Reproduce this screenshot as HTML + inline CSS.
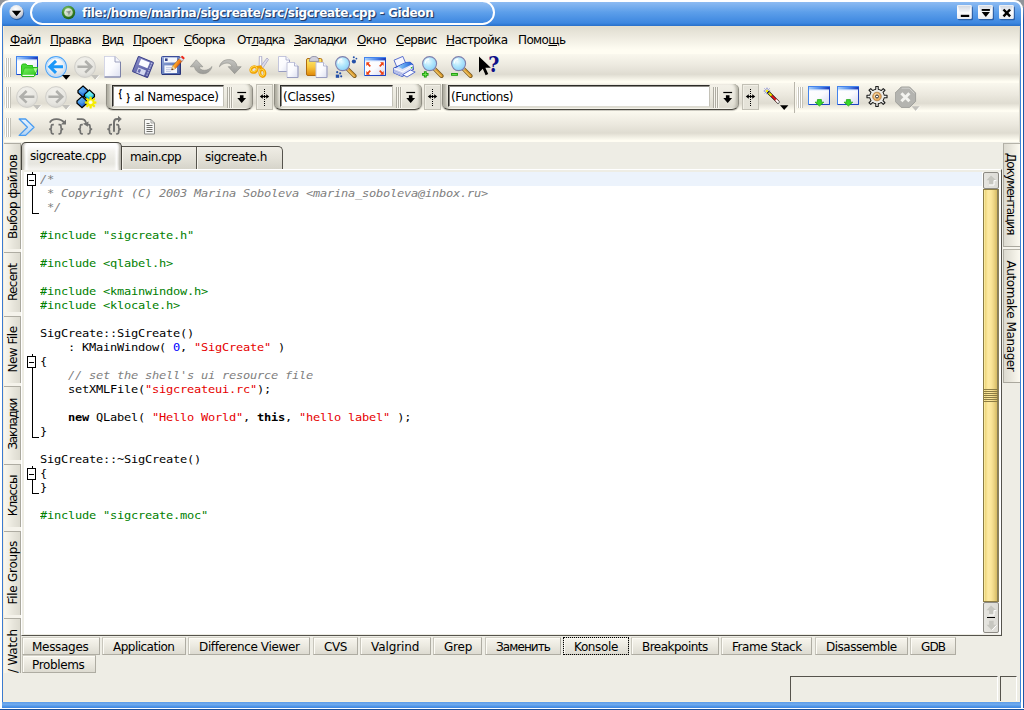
<!DOCTYPE html>
<html lang="ru"><head><meta charset="utf-8"><title>file:/home/marina/sigcreate/src/sigcreate.cpp - Gideon</title>
<style>
html{background:#90949a}
body{margin:0;width:1024px;height:710px;position:relative;overflow:hidden;background:#eeede5;font:12px/14px 'DejaVu Sans','Liberation Sans',sans-serif;color:#000}
div,span.t,svg.a{position:absolute;box-sizing:border-box}
span.t{white-space:pre}
u{text-decoration:underline;text-underline-offset:1px}
.tb{left:3px;width:1017px;background:linear-gradient(#faf8ee 0%,#ece9df 40%,#dfdcd1 70%,#fffdf2 95%,#fffdf2 100%)}
.h{width:6px;background:repeating-linear-gradient(90deg,#fff 0,#fff 1px,#c4c2b8 1px,#c4c2b8 2px)}
.code{font:12px/14px 'DejaVu Sans Mono','Liberation Mono',monospace;letter-spacing:-0.2246px;white-space:pre;left:40px;transform:scaleY(.83);transform-origin:0 11px}
.c{color:#808080;font-style:italic}.p{color:#008000}.s{color:#e60000}.n{color:#0000ff}.k{font-weight:bold}
.bt{height:18px;border:1px solid #aeaca2;border-top-color:#d2d0c6;border-left-color:#c8c6bc;background:linear-gradient(#f7f5ee,#ebe9e0 50%,#dddbd1);box-shadow:inset 1px 1px 0 #fdfcf6}
.vt{width:18px;left:3px;border-top:1px solid #aeaca2;border-right:1px solid #aaa89e;background:linear-gradient(90deg,#fbf9f0,#f0eee4 35%,#e6e4da 65%,#dddbd0)}
.vr{width:17px;left:1003px;border-top:1px solid #b4b2a8;border-left:1px solid #b0aea4;border-bottom:1px solid #aaa89e;background:linear-gradient(90deg,#dcdad0,#e6e4da 35%,#f0eee4 65%,#fbf9f0)}
.cb{height:26px;border-radius:0 6px 7px 7px/0 5px 6px 6px;border-bottom:1px solid #4a4840;border-left:1px solid #8e8c82;border-right:1px solid #8e8c82;background:linear-gradient(#f3f1e8,#ebe9df 50%,#dcdace);box-shadow:inset 5px 0 3px -2px #b0aea2,inset -4px 0 3px -2px #b4b2a6,inset 0 -2px 1px -1px #fbfaf2,0 1px 1px rgba(0,0,0,.22)}
.cbf{left:5px;top:1px;height:22px;background:#fff;border:1px solid #2c2b28;border-right-color:#c4c2b8;border-bottom-color:#dddbd2;box-shadow:inset 1px 1px 0 #8c8a84}
.sp{width:17px;height:26px;top:84px;background:#e5e3d9;border:1px solid #c2c0b5;box-shadow:inset 1px 1px 0 #f1efe6}
</style></head><body>
<div style="left:0px;top:0px;width:10px;height:10px;background:#90949a"></div>
<div style="left:1014px;top:0px;width:10px;height:10px;background:#90949a"></div>
<div style="left:0px;top:0px;width:1023px;height:26px;background:linear-gradient(#8dbbf2 0,#5d9fea 10px,#3d87e0 21px,#3580da 22px,#2c73cc 23.5px);border:2px solid #fff;border-bottom:0;border-radius:9px 9px 0 0"></div>
<div style="left:30px;top:0px;width:465px;height:25px;border:2px solid #fff;border-radius:12.5px;background:linear-gradient(#93bff3 0,#5d9fea 11px,#3d87e0 21px)"></div>
<div style="left:0px;top:8px;width:2px;height:702px;background:#fff"></div>
<div style="left:2px;top:25px;width:1px;height:683px;background:#3a7bd0"></div>
<div style="left:1020px;top:25px;width:1px;height:683px;background:#4183d6"></div>
<div style="left:1021px;top:8px;width:2px;height:702px;background:#fff"></div>
<div style="left:1023px;top:7px;width:1px;height:703px;background:linear-gradient(#6a88b4 0,#1c58a8 14px)"></div>
<div style="left:2px;top:702px;width:1019px;height:6px;background:linear-gradient(#5b9be8,#6fabee 40%,#3a85e0)"></div>
<div style="left:0px;top:708px;width:1024px;height:1px;background:#fff"></div>
<div style="left:0px;top:709px;width:1024px;height:1px;background:#18509c"></div>
<svg class="a" style="left:8px;top:4px" width="18" height="18" viewBox="0 0 18 18"><defs><radialGradient id="mb" cx=".45" cy=".3" r=".7"><stop offset="0" stop-color="#fff"/><stop offset=".6" stop-color="#e4e6ea"/><stop offset="1" stop-color="#a8b0c0"/></radialGradient></defs><circle cx="9" cy="9" r="7.200" fill="#123a7a" opacity=".6"/><circle cx="8.4" cy="8.1" r="7" fill="url(#mb)"/><path d="M3.8 6.8h9.4l-4.7 5.4z" fill="#000"/></svg>
<svg class="a" style="left:61px;top:5px" width="15" height="15" viewBox="0 0 15 15"><defs><radialGradient id="ti" cx=".4" cy=".3" r=".75"><stop offset="0" stop-color="#8cc878"/><stop offset=".55" stop-color="#3c8c2c"/><stop offset="1" stop-color="#1c5814"/></radialGradient><linearGradient id="tj" x1="0" y1="0" x2="1" y2="1"><stop offset="0" stop-color="#f4f8f0"/><stop offset="1" stop-color="#a8c0a0"/></linearGradient></defs><circle cx="7.500" cy="7.500" r="6.700" fill="url(#ti)"/><circle cx="7.500" cy="7.500" r="4.300" fill="url(#tj)"/><path d="M4.600 6.800l5.600-1.400-2.400 5.200-.8-2.800z" fill="#8c948c"/></svg>
<span class="t" style="left:82px;top:6px;font:bold 12px/14px 'DejaVu Sans','Liberation Sans',sans-serif;color:#fff;letter-spacing:-0.322px;text-shadow:1px 1px 0 #27406e,1px 1px 1px #27406e">file:/home/marina/sigcreate/src/sigcreate.cpp - Gideon</span>
<svg class="a" width="0" height="0"><defs><linearGradient id="tbg" x1="0" y1="0" x2="0" y2="1"><stop offset="0" stop-color="#f2f4f7"/><stop offset=".5" stop-color="#fdfdfe"/><stop offset="1" stop-color="#e8ebf0"/></linearGradient><linearGradient id="tbh" x1="0" y1="0" x2="0" y2="1"><stop offset="0" stop-color="#d2d8e2"/><stop offset="1" stop-color="#f4f6f9"/></linearGradient></defs></svg>
<svg class="a" style="left:957px;top:4px" width="18" height="18" viewBox="0 0 18 18"><rect x="1" y="2.200" width="15" height="14" rx="1.500" fill="#173f80" opacity=".6"/><rect x="0" y="1" width="14.800" height="14" rx="1.300" fill="url(#tbg)"/><path d="M1 1.800h12.800l-1.600 6.400H2.600z" fill="url(#tbh)"/><rect x="3.800" y="10.800" width="8.400" height="2.200" fill="#000"/></svg>
<svg class="a" style="left:978px;top:4px" width="18" height="18" viewBox="0 0 18 18"><rect x="1" y="2.200" width="15" height="14" rx="1.500" fill="#173f80" opacity=".6"/><rect x="0" y="1" width="14.800" height="14" rx="1.300" fill="url(#tbg)"/><path d="M1 1.800h12.800l-1.600 6.400H2.600z" fill="url(#tbh)"/><rect x="3.700" y="5" width="8.200" height="1.900" fill="#000"/><path d="M3.700 8h8.200l-4.100 5z" fill="#000"/></svg>
<svg class="a" style="left:999px;top:4px" width="18" height="18" viewBox="0 0 18 18"><rect x="1" y="2.200" width="15" height="14" rx="1.500" fill="#173f80" opacity=".6"/><rect x="0" y="1" width="14.800" height="14" rx="1.300" fill="url(#tbg)"/><path d="M1 1.800h12.800l-1.600 6.400H2.600z" fill="url(#tbh)"/><path d="M4.500 5.500l6.600 6.800M11.100 5.500l-6.600 6.800" stroke="#000" stroke-width="2.500"/></svg>
<div style="left:3px;top:26px;width:1017px;height:28px;background:linear-gradient(#e8e1ce 0,#e0ddd0 1px,#ece9de 10px,#fbf9ee 21px,#fffdf2 24px,#fffdf2 28px)"></div>
<span class="t" style="left:10px;top:33px;font:normal 12px/14px 'DejaVu Sans','Liberation Sans',sans-serif;color:#000;letter-spacing:-0.689px;"><u>Ф</u>айл</span>
<span class="t" style="left:50px;top:33px;font:normal 12px/14px 'DejaVu Sans','Liberation Sans',sans-serif;color:#000;letter-spacing:-0.779px;"><u>П</u>равка</span>
<span class="t" style="left:102px;top:33px;font:normal 12px/14px 'DejaVu Sans','Liberation Sans',sans-serif;color:#000;letter-spacing:-1.109px;"><u>В</u>ид</span>
<span class="t" style="left:133px;top:33px;font:normal 12px/14px 'DejaVu Sans','Liberation Sans',sans-serif;color:#000;letter-spacing:-0.702px;"><u>П</u>роект</span>
<span class="t" style="left:184px;top:33px;font:normal 12px/14px 'DejaVu Sans','Liberation Sans',sans-serif;color:#000;letter-spacing:-0.724px;"><u>С</u>борка</span>
<span class="t" style="left:237px;top:33px;font:normal 12px/14px 'DejaVu Sans','Liberation Sans',sans-serif;color:#000;letter-spacing:-0.994px;">От<u>л</u>адка</span>
<span class="t" style="left:294px;top:33px;font:normal 12px/14px 'DejaVu Sans','Liberation Sans',sans-serif;color:#000;letter-spacing:-1.084px;"><u>З</u>акладки</span>
<span class="t" style="left:357px;top:33px;font:normal 12px/14px 'DejaVu Sans','Liberation Sans',sans-serif;color:#000;letter-spacing:-0.673px;"><u>О</u>кно</span>
<span class="t" style="left:396px;top:33px;font:normal 12px/14px 'DejaVu Sans','Liberation Sans',sans-serif;color:#000;letter-spacing:-0.710px;"><u>С</u>ервис</span>
<span class="t" style="left:446px;top:33px;font:normal 12px/14px 'DejaVu Sans','Liberation Sans',sans-serif;color:#000;letter-spacing:-0.659px;"><u>Н</u>астройка</span>
<span class="t" style="left:518px;top:33px;font:normal 12px/14px 'DejaVu Sans','Liberation Sans',sans-serif;color:#000;letter-spacing:-0.623px;">Помо<u>щ</u>ь</span>
<div class="tb" style="top:54px;height:29px"></div>
<div class="tb" style="top:83px;height:29px"></div>
<div class="tb" style="top:112px;height:30px"></div>
<div class="h" style="left:5px;top:58px;height:19px"></div>
<div class="h" style="left:5px;top:87px;height:21px"></div>
<div class="h" style="left:5px;top:118px;height:19px"></div>
<div class="h" style="left:797px;top:87px;height:21px"></div>
<div style="left:794px;top:82px;width:1px;height:31px;background:#b9b6ab"></div>
<div style="left:795px;top:82px;width:1px;height:31px;background:#fbf9f0"></div>
<svg class="a" width="0" height="0"><defs>
<linearGradient id="wt" x1="0" y1="0" x2="1" y2="0"><stop offset="0" stop-color="#a8d0fc"/><stop offset=".5" stop-color="#5890ec"/><stop offset="1" stop-color="#1c3cbc"/></linearGradient>
<linearGradient id="wb" x1="0" y1="0" x2="1" y2="1"><stop offset="0" stop-color="#fff"/><stop offset=".55" stop-color="#fbfbfe"/><stop offset="1" stop-color="#d4d8f0"/></linearGradient>
<linearGradient id="pg" x1="0" y1="0" x2="1" y2="1"><stop offset="0" stop-color="#fff"/><stop offset=".5" stop-color="#fbfbfe"/><stop offset="1" stop-color="#dcdff0"/></linearGradient>
<linearGradient id="gf" x1="0" y1="0" x2="1" y2="1"><stop offset="0" stop-color="#78f060"/><stop offset="1" stop-color="#30c820"/></linearGradient>
<radialGradient id="cb" cx=".45" cy=".25" r=".8"><stop offset="0" stop-color="#fff"/><stop offset=".6" stop-color="#e8ecf0"/><stop offset="1" stop-color="#c4ccd8"/></radialGradient>
<radialGradient id="cg" cx=".45" cy=".25" r=".8"><stop offset="0" stop-color="#f2f1ec"/><stop offset=".7" stop-color="#e6e5e0"/><stop offset="1" stop-color="#d4d3ce"/></radialGradient>
<linearGradient id="gr" x1="0" y1="0" x2="0" y2="1"><stop offset="0" stop-color="#c4c4c0"/><stop offset="1" stop-color="#9a9a96"/></linearGradient>
<radialGradient id="ln" cx=".4" cy=".35" r=".7"><stop offset="0" stop-color="#ecfbff"/><stop offset=".5" stop-color="#b0e6fc"/><stop offset="1" stop-color="#8ccef6"/></radialGradient>
<linearGradient id="hd" x1="0" y1="0" x2="1" y2="0"><stop offset="0" stop-color="#f8d060"/><stop offset="1" stop-color="#c07808"/></linearGradient>
<linearGradient id="cl" x1="0" y1="0" x2="0" y2="1"><stop offset="0" stop-color="#fcec70"/><stop offset=".5" stop-color="#f8c840"/><stop offset="1" stop-color="#e08808"/></linearGradient>
<linearGradient id="fl" x1="0" y1="0" x2="1" y2="1"><stop offset="0" stop-color="#8c90cc"/><stop offset="1" stop-color="#4c5098"/></linearGradient>
<linearGradient id="fs" x1="0" y1="0" x2="1" y2="1"><stop offset="0" stop-color="#98acdc"/><stop offset=".5" stop-color="#6c84c0"/><stop offset="1" stop-color="#4860a8"/></linearGradient>
<linearGradient id="pr" x1="0" y1="0" x2="1" y2="0"><stop offset="0" stop-color="#90d4fc"/><stop offset="1" stop-color="#1c5cd8"/></linearGradient>
<linearGradient id="ch" x1="0" y1="0" x2="0" y2="1"><stop offset="0" stop-color="#eaf4fe"/><stop offset="1" stop-color="#b4d4f4"/></linearGradient>
<linearGradient id="b1" x1="0" y1="0" x2="1" y2="1"><stop offset="0" stop-color="#60c0ff"/><stop offset="1" stop-color="#0848c8"/></linearGradient>
<linearGradient id="b2" x1="0" y1="0" x2="0" y2="1"><stop offset="0" stop-color="#40f0f0"/><stop offset="1" stop-color="#0898c8"/></linearGradient>
<linearGradient id="pc" x1="0" y1="0" x2="1" y2="1"><stop offset="0" stop-color="#ffe040"/><stop offset=".5" stop-color="#f89020"/><stop offset="1" stop-color="#e05010"/></linearGradient>
<g id="page"><path d="M.5.5h10.500l5.500 5.500v15h-16z" fill="url(#pg)" stroke="#a8acc8"/><path d="M.5 21V.5H11" fill="none" stroke="#d4d6e6"/><path d="M11 .5V6h5.500" fill="#f4f5fc" stroke="#9498b8" stroke-width=".9"/><path d="M16.500 6v15H.5" fill="none" stroke="#7c82a8"/></g>
<g id="spage"><path d="M.5.5h7.500l3.500 3.500v11.500h-11z" fill="url(#pg)" stroke="#c4c6dc"/><path d="M8 .5V4h3.500" fill="#f4f5fc" stroke="#a4a8c8" stroke-width=".8"/><path d="M11.500 4v11.500H.5" fill="none" stroke="#9a9ec0"/></g>
<g id="mag"><path d="M12 12.400l7.600 7.600" stroke="#7a5a20" stroke-width="4" stroke-linecap="round"/><path d="M13 13.400l6.400 6.400" stroke="#e0a030" stroke-width="2.500" stroke-linecap="round"/><path d="M13.200 14.600l5.600 5.600" stroke="#f8dc88" stroke-width=".9" stroke-linecap="round"/><path d="M10.5 11l2.6 2.6" stroke="#a8a8c4" stroke-width="2.4"/><circle cx="7.6" cy="7.6" r="7" fill="url(#ln)" stroke="#8080ac" stroke-width="1.100"/><path d="M3.2 7.4a4.6 4.6 0 0 1 4-4.4" stroke="#fff" stroke-width="1.3" fill="none" opacity=".9"/></g>
<g id="barr"><circle cx="11" cy="11" r="10.4" fill="url(#cg)" stroke="#d0cfca" stroke-width="1"/></g>
<g id="win"><rect x=".5" y=".5" width="21" height="18" fill="url(#wb)" stroke="#4484ec"/><rect x="1" y="1" width="20" height="2.600" fill="url(#wt)"/><rect x="1" y="3.600" width="20" height="1" fill="#dce8fc" opacity=".8"/><path d="M21.500 1v17.500H1" fill="none" stroke="#2044c0"/></g>
<g id="garr"><path d="M3 0h5v3.200h3L5.500 8 0 3.200h3z" fill="#38d828" stroke="#18a010" stroke-width=".9"/></g>
</defs></svg>
<svg class="a" style="left:16px;top:56px" width="23" height="22" viewBox="0 0 23 22"><use href="#win"/><path d="M5.500 9.500l1-1.500h3.500l1 1.500h5.500v2h5l-2.800 8.500H5.500z" fill="#48d838" stroke="#28c018" stroke-width="1" stroke-linejoin="round"/><path d="M8.500 12h13l-3 7H6z" fill="url(#gf)" stroke="#28b818" stroke-width=".7"/><path d="M6.500 19.400h11.500" stroke="#f0fff0" stroke-width="1.300"/><path d="M6 20.600h12" stroke="#20b010" stroke-width="1"/><path d="M17.500 12.300h3.800l-1.600 4.400z" fill="#c8fcb0" opacity=".85"/></svg>
<svg class="a" style="left:45px;top:56px" width="26" height="25" viewBox="0 0 26 25"><circle cx="11" cy="11" r="10.400" fill="url(#cb)" stroke="#4ca4f8" stroke-width="1.100"/><circle cx="11" cy="11" r="9.200" fill="none" stroke="#c0defc" stroke-width="1.300"/><path d="M18 10.800H6.500M11 4.800L4.800 10.800l6.200 6" stroke="#1c98f8" stroke-width="3" fill="none" stroke-linejoin="miter"/><path d="M17 19h8.4l-4.2 4.8z" fill="#000"/></svg>
<svg class="a" style="left:74px;top:56px" width="26" height="25" viewBox="0 0 26 25"><use href="#barr"/><path d="M3.4 10.8H16M11.2 5l6 5.8-6 5.8" stroke="#b0b0ac" stroke-width="2.6" fill="none"/><path d="M17 19h8.4l-4.2 4.8z" fill="#c2c1bc"/><path d="M21.4 23.8l4-4.6" stroke="#fff" stroke-width=".9"/></svg>
<svg class="a" style="left:104px;top:56px" width="18" height="22" viewBox="0 0 18 22"><use href="#page"/></svg>
<svg class="a" style="left:131px;top:55px" width="24" height="24" viewBox="0 0 24 24"><g transform="translate(12 12) rotate(22) translate(-8.2 -8.2)"><rect x="0" y="0" width="16.4" height="16.4" rx="1" fill="url(#fl)" stroke="#3c4088" stroke-width="1"/><rect x="3.400" y="1.400" width="9.400" height="6.400" fill="#fbfbff"/><rect x="4" y="10.4" width="8.4" height="5.4" fill="#d4d8f0"/><rect x="5" y="11.4" width="2.4" height="3.6" fill="#6468b0"/><path d="M15 1v14.4" stroke="#c8ccec" stroke-width="1" stroke-dasharray="1.5 1"/></g></svg>
<svg class="a" style="left:161px;top:55px" width="24" height="22" viewBox="0 0 24 22"><rect x=".5" y="1.5" width="18.5" height="18" rx="1" fill="url(#fs)" stroke="#3c4c98"/><rect x="3" y="2.5" width="13" height="5" fill="#f4f6fc"/><rect x="4" y="3.4" width="2.6" height="2.6" fill="#34448c"/><rect x="3.4" y="10.4" width="12.6" height="7.6" fill="#f4f6fc"/><path d="M5 12.6h8M5 14.6h8M5 16.4h5" stroke="#b8c0e0" stroke-width=".8"/><path d="M19.5 2v17.5H1" fill="none" stroke="#283478" stroke-width="1"/><g transform="translate(10.6 15) rotate(-48)"><path d="M0 0l3.6-1.9H14.6v3.8H3.6z" fill="url(#pc)" stroke="#a04808" stroke-width=".5"/><path d="M0 0l3.6-1.9v3.8z" fill="#f0d8a0"/><path d="M0 0l1.5-.8v1.6z" fill="#201008"/><rect x="13.4" y="-1.9" width="2.4" height="3.8" fill="#e0e4ec" stroke="#8088a0" stroke-width=".4"/><rect x="15.8" y="-1.9" width="2" height="3.8" rx=".8" fill="#f02818"/></g></svg>
<svg class="a" style="left:190px;top:59px" width="23" height="16" viewBox="0 0 23 16"><path d="M6.3.8L.3 7.8h4.2c.6 4.4 4.4 6.9 8.6 6.9 4.6 0 7.800-3 8.900-7.200-2.200 2.600-4.800 3.800-7.600 3.800-2.800 0-4.900-1.300-5.300-3.500h3.800z" fill="url(#gr)" stroke="#8e8e8a" stroke-width=".6" stroke-linejoin="round"/></svg>
<svg class="a" style="left:219px;top:59px" width="23" height="16" viewBox="0 0 23 16"><path d="M.4 7.800C1.500 3.400 4.800.6 9.600.6c4.600 0 7.900 2.500 8.500 7.100h4.100l-6.600 7.000-6.400-7.000h3.800C12.500 5.400 10.700 4.100 8.000 4.100 5.000 4.100 2.600 5.300.4 7.800z" fill="url(#gr)" stroke="#8e8e8a" stroke-width=".6" stroke-linejoin="round"/></svg>
<svg class="a" style="left:249px;top:56px" width="20" height="22" viewBox="0 0 20 22"><path d="M10.300.3h2.400l.3 12.500-2.900.2z" fill="#e8e8f2" stroke="#9c9cc0" stroke-width=".7"/><path d="M11.500.8v11" stroke="#fff" stroke-width=".8"/><path d="M18.000 2.000l1.500 1.500-6.400 9.600-2.300-1.600z" fill="#dcdcec" stroke="#9c9cc0" stroke-width=".7"/><ellipse cx="5.000" cy="13.600" rx="3.300" ry="2.700" transform="rotate(-30 5.000 13.600)" fill="none" stroke="#f0a000" stroke-width="2.800"/><ellipse cx="13.400" cy="17.000" rx="2.500" ry="3.500" transform="rotate(-10 13.400 17.000)" fill="none" stroke="#f0a000" stroke-width="2.800"/><path d="M7.800 11.400l3.600-.6 1.600 2.600" fill="none" stroke="#f0a000" stroke-width="2.800"/><ellipse cx="4.700" cy="13.100" rx="3.300" ry="2.600" transform="rotate(-30 4.700 13.100)" fill="none" stroke="#ffdc50" stroke-width=".9"/><ellipse cx="13.000" cy="16.600" rx="2.500" ry="3.500" transform="rotate(-10 13.000 16.600)" fill="none" stroke="#ffdc50" stroke-width=".9"/></svg>
<svg class="a" style="left:278px;top:56px" width="21" height="22" viewBox="0 0 21 22"><use href="#spage"/><use href="#spage" x="8.500" y="6"/></svg>
<svg class="a" style="left:306px;top:56px" width="22" height="22" viewBox="0 0 22 22"><rect x=".5" y="2.500" width="15.500" height="17" rx="1.500" fill="url(#cl)" stroke="#b06c10"/><path d="M3.300 5.400c0-3.200 1.700-5 4.800-5s4.800 1.800 4.800 5z" fill="#d0d0dc" stroke="#8484a0" stroke-width=".8"/><use href="#spage" x="9.500" y="6"/></svg>
<svg class="a" style="left:335px;top:56px" width="23" height="22" viewBox="0 0 23 22"><use href="#mag"/><g fill="#2450a8"><circle cx="18.900" cy="5.500" r="2.100"/><circle cx="18.800" cy="1.300" r="1"/><circle cx="21.400" cy="2.600" r=".9"/><rect x=".8" y="18.600" width="3.400" height="3.200"/><circle cx="2.200" cy="16.200" r="1.100"/><circle cx="5.200" cy="17.300" r="1.100"/><circle cx="6.200" cy="20.300" r="1.100"/></g></svg>
<svg class="a" style="left:364px;top:57px" width="23" height="20" viewBox="0 0 23 20"><use href="#win"/><g fill="#f04010"><path d="M2.300 5.300h3.600l-1.200 1.200 2.200 2.200-1.200 1.200-2.200-2.200-1.200 1.200z"/><path d="M19.700 5.300v3.600l-1.200-1.200-2.200 2.200-1.200-1.200 2.200-2.200-1.200-1.200z"/><path d="M2.300 17.700v-3.600l1.200 1.200 2.200-2.200 1.200 1.200-2.200 2.200 1.200 1.200z"/><path d="M19.700 17.700h-3.600l1.200-1.200-2.200-2.200 1.200-1.200 2.200 2.200 1.200-1.200z"/></g></svg>
<svg class="a" style="left:393px;top:56px" width="23" height="22" viewBox="0 0 23 22"><path d="M1 4.200l8.800-3.800 3 7-8.800 4z" fill="#f6f6fd" stroke="#4860c8" stroke-width=".9"/><path d="M.8 12.200l4.200-2 8-3.600 3.800-.4 3 2.400.6 4.800-11 7-8.600-3.600z" fill="#dfe3f6" stroke="#2c4cc4" stroke-width="1.100" stroke-linejoin="round"/><path d="M.8 12.200l8.600 3.400v4.800l-8.600-3.600z" fill="#cdd3f0"/><path d="M5 10.400l8-3.800 3.600-.4 2.600 2.100-9.800 4.700z" fill="url(#pr)"/><path d="M1.200 12.500l8.200 3.200 10.600-6.200" fill="none" stroke="#fff" stroke-width="1"/><path d="M1 14.600l8.400 3.400M1 16.300l8.400 3.400" stroke="#98a4e0" stroke-width=".8"/><path d="M9.600 18.600l7.800-4.600 4.800 2-8.200 5z" fill="#fbfbff" stroke="#4860c8" stroke-width=".9"/><circle cx="18.600" cy="11.800" r=".8" fill="#20c020"/></svg>
<svg class="a" style="left:422px;top:56px" width="23" height="22" viewBox="0 0 23 22"><use href="#mag"/><path d="M3.300 15.200v6.400M.1 18.400h6.400" stroke="#189808" stroke-width="2.800"/><path d="M3.300 16.200v4.400M1.100 18.400h4.400" stroke="#70e850" stroke-width="1"/></svg>
<svg class="a" style="left:451px;top:56px" width="23" height="22" viewBox="0 0 23 22"><use href="#mag"/><path d="M.1 18.400h6.800" stroke="#189808" stroke-width="2.800"/><path d="M1.100 18.400h4.800" stroke="#70e850" stroke-width="1"/></svg>
<svg class="a" style="left:478px;top:55px" width="24" height="22" viewBox="0 0 24 22"><path d="M1 1.400V17.400l3.800-3.600 2.800 6.400 2.600-1.200-2.800-6.200h5.400z" fill="#000"/><text transform="translate(10.300 16.800) scale(.86 1)" font-family="'DejaVu Serif','Liberation Serif',serif" font-weight="bold" font-size="22" fill="#101088">?</text></svg>
<svg class="a" style="left:16px;top:86px" width="26" height="25" viewBox="0 0 26 25"><use href="#barr"/><path d="M18.4 10.8H6M10.6 5L4.6 10.8l6 5.8" stroke="#b0b0ac" stroke-width="2.6" fill="none"/><path d="M17 19h8.4l-4.2 4.8z" fill="#c2c1bc"/><path d="M21.4 23.8l4-4.6" stroke="#fff" stroke-width=".9"/></svg>
<svg class="a" style="left:45px;top:86px" width="26" height="25" viewBox="0 0 26 25"><use href="#barr"/><path d="M3.4 10.8H16M11.2 5l6 5.8-6 5.8" stroke="#b0b0ac" stroke-width="2.6" fill="none"/><path d="M17 19h8.4l-4.2 4.8z" fill="#c2c1bc"/><path d="M21.4 23.8l4-4.6" stroke="#fff" stroke-width=".9"/></svg>
<svg class="a" style="left:76px;top:85px" width="24" height="24" viewBox="0 0 24 24"><g transform="translate(2 1)"><path d="M5 0l5 4.500v2.200l-5 4.500-5-4.500V4.500z" fill="url(#b1)" stroke="#000" stroke-width="1.300"/><path d="M5 .8l4.200 3.800-4.200 3-4.200-3z" fill="#8cd8ff" opacity=".35"/></g><g transform="translate(8.400 5)"><path d="M5 0l5 4.500v2.200l-5 4.500-5-4.500V4.500z" fill="url(#b2)" stroke="#000" stroke-width="1.300"/><path d="M5 .8l4.200 3.800-4.200 3-4.200-3z" fill="#a0ffff" opacity=".5"/></g><g transform="translate(1 11.500)"><path d="M5 0l5 4.500v2.200l-5 4.500-5-4.500V4.500z" fill="url(#b1)" stroke="#000" stroke-width="1.300"/><path d="M5 .8l4.200 3.800-4.200 3-4.200-3z" fill="#8cd8ff" opacity=".3"/></g><g transform="translate(14.600 17.300)"><path d="M-1-5.500h2l.3 2.600 2.200-1.600 1.300 1.300-1.600 2.200 2.600.3v2l-2.600.3 1.600 2.200-1.300 1.300-2.200-1.600-.3 2.600h-2l-.3-2.600-2.200 1.600-1.300-1.300 1.600-2.200-2.600-.3v-2l2.600-.3-1.600-2.200 1.300-1.300 2.200 1.600z" fill="#f4ec00"/><circle r="2" fill="#fffcc0"/><circle r="1.100" fill="#fff"/></g></svg>
<svg class="a" style="left:763px;top:87px" width="26" height="26" viewBox="0 0 26 26"><path d="M5.600 5.600L15 15" stroke="#000" stroke-width="3.100" stroke-linecap="round"/><path d="M8.600 8.600L14.800 14.800" stroke="#e81818" stroke-width="2" stroke-linecap="butt"/><path d="M13.400 13.400L15 15" stroke="#fff" stroke-width="2" stroke-linecap="round"/><path d="M5.600 5.600L8.600 8.600" stroke="#f8f000" stroke-width="2"/><path d="M4 .8v6.400M.8 4h6.400M1.700 1.700l4.600 4.600M6.300 1.700L1.700 6.300" stroke="#2838c8" stroke-width=".9" stroke-dasharray="1 .8"/><circle cx="4" cy="4" r="1.200" fill="#f8f000"/><path d="M17 18.200h8.400l-4.200 4.800z" fill="#000"/></svg>
<svg class="a" style="left:808px;top:86px" width="23" height="22" viewBox="0 0 23 22"><use href="#win"/><use href="#garr" transform="translate(7 13.600) scale(.8)"/></svg>
<svg class="a" style="left:837px;top:86px" width="23" height="22" viewBox="0 0 23 22"><use href="#win"/><use href="#garr" transform="translate(7 13.600) scale(.8)"/></svg>
<svg class="a" style="left:866px;top:86px" width="22" height="22" viewBox="0 0 22 22"><path d="M9.76 3.31L9.79 0.47L12.21 0.47L12.24 3.31L15.21 4.54L17.24 2.55L18.95 4.26L16.96 6.29L18.19 9.26L21.03 9.29L21.03 11.71L18.19 11.74L16.96 14.71L18.95 16.74L17.24 18.45L15.21 16.46L12.24 17.69L12.21 20.53L9.79 20.53L9.76 17.69L6.79 16.46L4.76 18.45L3.05 16.74L5.04 14.71L3.81 11.74L0.97 11.71L0.97 9.29L3.81 9.26L5.04 6.29L3.05 4.26L4.76 2.55L6.79 4.54z" fill="#f0f0ec" stroke="#202020" stroke-width="1.100" stroke-linejoin="round"/><circle cx="11" cy="10.500" r="6.600" fill="#ecece8"/><circle cx="11" cy="10.500" r="4.300" fill="#e8ac60" stroke="#a87030" stroke-width=".7"/><circle cx="10.600" cy="9.900" r="2.600" fill="#f6d4a4"/><circle cx="11" cy="10.500" r="1.500" fill="#fff" stroke="#282828" stroke-width="1"/></svg>
<svg class="a" style="left:895px;top:86px" width="26" height="26" viewBox="0 0 26 26"><path d="M6.200 1h8.400l6 6v8.400l-6 6H6.200l-6-6V7z" fill="#b4b4b0" stroke="#a0a09c" stroke-width="1"/><path d="M6.600 2.200h7.600l5.200 5.200" fill="none" stroke="#d0d0cc" stroke-width="1"/><path d="M6.400 7.200l8 8M14.400 7.200l-8 8" stroke="#f4f4f0" stroke-width="3"/><path d="M16.600 20.200h8.400l-4.200 4.800z" fill="#c2c1bc"/><path d="M21 25l4-4.600" stroke="#fff" stroke-width=".9"/></svg>
<svg class="a" style="left:18px;top:118px" width="18" height="19" viewBox="0 0 18 19"><path d="M1.200 1h6.400l8.400 8.200-8.400 8.200H1.200l8.200-8.200z" fill="url(#ch)" stroke="#4a9cf0" stroke-width="1.300" stroke-linejoin="round"/></svg>
<svg class="a" style="left:40px;top:112px" width="90" height="30" viewBox="40 112 90 30"><g fill="none" stroke="#727270" stroke-width="1.700"><path d="M53.8 124.6h-1.000q-1.500 0-1.500 1.500v1.300q0 1.600-2.100 1.800 2.100.2 2.100 1.800v1.300q0 1.500 1.500 1.500h1.000"/><path d="M58.5 124.6h1.000q1.500 0 1.500 1.500v1.300q0 1.600 2.100 1.800-2.100.2-2.100 1.800v1.300q0 1.500-1.500 1.500h-1.000"/><path d="M82.8 124.6h-1.000q-1.500 0-1.500 1.500v1.300q0 1.600-2.100 1.800 2.100.2 2.100 1.800v1.300q0 1.500 1.500 1.500h1.000"/><path d="M87.5 124.6h1.000q1.500 0 1.500 1.500v1.300q0 1.600 2.100 1.800-2.100.2-2.100 1.800v1.300q0 1.500-1.500 1.500h-1.000"/><path d="M112.0 124.6h-1.000q-1.500 0-1.500 1.500v1.300q0 1.600-2.100 1.800 2.100.2 2.100 1.800v1.300q0 1.500 1.500 1.500h1.000"/><path d="M116.2 124.6h1.000q1.500 0 1.500 1.500v1.300q0 1.600 2.100 1.800-2.100.2-2.100 1.800v1.300q0 1.500-1.500 1.500h-1.000"/><path d="M49.800 122.600C52 118.200 60 117.600 64.200 122.400" stroke-width="1.800"/><path d="M76.800 119.100h5c2.400 0 3.600 1.200 4.200 3.600" stroke-width="1.800"/><path d="M114 131.800v-9.400c0-2.200 1-3.300 3.200-3.300h1.400" stroke-width="2"/></g><path d="M66 119.600v5h-5.200z" fill="#727270"/><path d="M83 123.800l5.600-2.400-.8 5.400z" fill="#727270"/><path d="M118 115.800l3.800 3.300-3.800 3.300z" fill="#727270"/></svg>
<svg class="a" style="left:144px;top:119px" width="11" height="16" viewBox="0 0 11 16"><path d="M.5.500h6.500l3.500 3.500v11H.5z" fill="#f8f8f6" stroke="#8c8c88"/><path d="M7 .5V4h3.500" fill="none" stroke="#8c8c88" stroke-width=".8"/><path d="M2.500 4.500h3M2.500 6.500h6M2.500 8.500h6M2.500 10.500h6M2.500 12.500h6" stroke="#70706c" stroke-width="1"/></svg>
<div class="cb" style="left:106px;top:84px;width:147px"><div class="cbf" style="width:112px"></div><div style="left:120px;top:3px;width:1px;height:21px;background:#aeaca2"></div><div style="left:121px;top:3px;width:1px;height:21px;background:#f8f6ee"></div><div style="left:122px;top:3px;width:1px;height:21px;background:#aeaca2"></div><div style="left:123px;top:3px;width:1px;height:21px;background:#f8f6ee"></div><div style="left:124px;top:3px;width:1px;height:21px;background:#aeaca2"></div><div style="left:125px;top:3px;width:1px;height:21px;background:#f8f6ee"></div><svg class="a" style="left:130px;top:7px" width="10" height="12" viewBox="0 0 10 12"><rect x="0.300" y="0.900" width="8.800" height="1.200" fill="#000"/><path d="M2.900 4.300h3.600v2.800h2.600l-4.400 4.800-4.400-4.800h2.600z" fill="#000"/></svg></div>
<div class="cb" style="left:274px;top:84px;width:148px"><div class="cbf" style="width:113px"></div><div style="left:121px;top:3px;width:1px;height:21px;background:#aeaca2"></div><div style="left:122px;top:3px;width:1px;height:21px;background:#f8f6ee"></div><div style="left:123px;top:3px;width:1px;height:21px;background:#aeaca2"></div><div style="left:124px;top:3px;width:1px;height:21px;background:#f8f6ee"></div><div style="left:125px;top:3px;width:1px;height:21px;background:#aeaca2"></div><div style="left:126px;top:3px;width:1px;height:21px;background:#f8f6ee"></div><svg class="a" style="left:131px;top:7px" width="10" height="12" viewBox="0 0 10 12"><rect x="0.300" y="0.900" width="8.800" height="1.200" fill="#000"/><path d="M2.900 4.300h3.600v2.800h2.600l-4.400 4.800-4.400-4.800h2.600z" fill="#000"/></svg></div>
<div class="cb" style="left:442px;top:84px;width:297px"><div class="cbf" style="width:262px"></div><div style="left:270px;top:3px;width:1px;height:21px;background:#aeaca2"></div><div style="left:271px;top:3px;width:1px;height:21px;background:#f8f6ee"></div><div style="left:272px;top:3px;width:1px;height:21px;background:#aeaca2"></div><div style="left:273px;top:3px;width:1px;height:21px;background:#f8f6ee"></div><div style="left:274px;top:3px;width:1px;height:21px;background:#aeaca2"></div><div style="left:275px;top:3px;width:1px;height:21px;background:#f8f6ee"></div><svg class="a" style="left:280px;top:7px" width="10" height="12" viewBox="0 0 10 12"><rect x="0.300" y="0.900" width="8.800" height="1.200" fill="#000"/><path d="M2.900 4.300h3.600v2.800h2.600l-4.400 4.800-4.400-4.800h2.600z" fill="#000"/></svg></div>
<span class="t" style="left:134px;top:90px;font:normal 12px/14px 'DejaVu Sans','Liberation Sans',sans-serif;color:#000;letter-spacing:-0.415px;">al Namespace)</span>
<span class="t" style="left:118px;top:88px;font:bold 10px/12px 'DejaVu Sans','Liberation Sans',sans-serif;color:#000;transform:scaleX(.62);transform-origin:0 0">{</span>
<span class="t" style="left:126px;top:92px;font:bold 10px/12px 'DejaVu Sans','Liberation Sans',sans-serif;color:#000;transform:scaleX(.62);transform-origin:0 0">}</span>
<span class="t" style="left:283px;top:90px;font:normal 12px/14px 'DejaVu Sans','Liberation Sans',sans-serif;color:#000;letter-spacing:-0.286px;">(Classes)</span>
<span class="t" style="left:451px;top:90px;font:normal 12px/14px 'DejaVu Sans','Liberation Sans',sans-serif;color:#000;letter-spacing:-0.423px;">(Functions)</span>
<div class="sp" style="left:256px"><svg class="a" style="left:2px;top:3px" width="12" height="18" viewBox="0 0 12 18"><path d="M5.500 1v17" stroke="#000" stroke-width="1" stroke-dasharray="1 1"/><path d="M2 8.500h7" stroke="#000" stroke-width="1.200"/><path d="M3.800 6.300v4.400L.8 8.500zM7.200 6.300v4.400l3-2.200z" fill="#000"/></svg></div>
<div class="sp" style="left:424px"><svg class="a" style="left:2px;top:3px" width="12" height="18" viewBox="0 0 12 18"><path d="M5.500 1v17" stroke="#000" stroke-width="1" stroke-dasharray="1 1"/><path d="M2 8.500h7" stroke="#000" stroke-width="1.200"/><path d="M3.800 6.300v4.400L.8 8.500zM7.200 6.300v4.400l3-2.200z" fill="#000"/></svg></div>
<div class="sp" style="left:742px"><svg class="a" style="left:2px;top:3px" width="12" height="18" viewBox="0 0 12 18"><path d="M5.500 1v17" stroke="#000" stroke-width="1" stroke-dasharray="1 1"/><path d="M2 8.500h7" stroke="#000" stroke-width="1.200"/><path d="M3.800 6.300v4.400L.8 8.500zM7.200 6.300v4.400l3-2.200z" fill="#000"/></svg></div>
<div style="left:3px;top:248px;width:18px;height:370px;background:#f5f3eb"></div>
<div class="vt" style="top:143px;height:106px"></div>
<div class="vt" style="top:252px;height:60px"></div>
<div class="vt" style="top:316px;height:67px"></div>
<div class="vt" style="top:386px;height:74px"></div>
<div class="vt" style="top:464px;height:63px"></div>
<div class="vt" style="top:531px;height:84px"></div>
<div class="vt" style="top:618px;height:72px"></div>
<svg class="a" style="left:0;top:142px" width="22" height="531" viewBox="0 142 22 531" font-family="'DejaVu Sans','Liberation Sans',sans-serif" font-size="12"><text transform="translate(16.5 239) rotate(-90)" textLength="85" lengthAdjust="spacing">Выбор файлов</text><text transform="translate(16.5 301) rotate(-90)" textLength="38" lengthAdjust="spacing">Recent</text><text transform="translate(16.5 372.5) rotate(-90)" textLength="46.6" lengthAdjust="spacing">New File</text><text transform="translate(16.5 449.6) rotate(-90)" textLength="52" lengthAdjust="spacing">Закладки</text><text transform="translate(16.5 516.2) rotate(-90)" textLength="41.7" lengthAdjust="spacing">Классы</text><text transform="translate(16.5 604.5) rotate(-90)" textLength="63.9" lengthAdjust="spacing">File Groups</text><text transform="translate(16.5 673) rotate(-90)" textLength="44" lengthAdjust="spacing">/ Watch</text></svg>
<div style="left:3px;top:673px;width:18px;height:28px;background:#eeede5"></div>
<div style="left:1003px;top:246px;width:17px;height:4px;background:#f6f4ec"></div>
<div class="vr" style="top:143px;height:104px"></div>
<div class="vr" style="top:249px;height:134px"></div>
<svg class="a" style="left:1002px;top:142px" width="18" height="260" viewBox="1002 142 18 260" font-family="'DejaVu Sans','Liberation Sans',sans-serif" font-size="12"><text transform="translate(1007.200 152.9) rotate(90)" textLength="82.5" lengthAdjust="spacing">Документация</text><text transform="translate(1007.200 260.5) rotate(90)" textLength="111.3" lengthAdjust="spacing">Automake Manager</text></svg>
<div style="left:121px;top:146px;width:162px;height:23px;border:1px solid #55534c;border-bottom:0;border-left:0;border-radius:0 5px 0 0;background:linear-gradient(#efede5,#e4e2d9 50%,#d6d4ca)"></div>
<div style="left:196px;top:147px;width:1px;height:22px;background:#55534c"></div>
<div style="left:197px;top:147px;width:1px;height:22px;background:#f6f4ec"></div>
<div style="left:122px;top:147px;width:1px;height:22px;background:#f6f4ec"></div>
<span class="t" style="left:130px;top:150px;font:normal 12px/14px 'DejaVu Sans','Liberation Sans',sans-serif;color:#000;letter-spacing:-0.580px;">main.cpp</span>
<span class="t" style="left:205px;top:150px;font:normal 12px/14px 'DejaVu Sans','Liberation Sans',sans-serif;color:#000;letter-spacing:-0.447px;">sigcreate.h</span>
<div style="left:21px;top:169px;width:981px;height:467px;border-left:1px solid #fff;border-top:1px solid #fff;border-right:1px solid #55534c;border-bottom:1px solid #55534c"></div>
<div style="left:24px;top:172px;width:977px;height:462px;background:#fff"></div>
<div style="left:21px;top:142px;width:101px;height:28px;border:1px solid #45433c;border-bottom:0;border-radius:5px 5px 0 0;background:linear-gradient(90deg,rgba(255,255,255,0) 3px,rgba(255,255,255,.95) 4px,rgba(255,255,255,0) 7px,rgba(255,255,255,0) 92px,rgba(255,255,255,.95) 95px,rgba(255,255,255,0) 96px),linear-gradient(#fff 0,#fff 3px,#f3f2ee 8px,#e9e8e2 16px,#e7e6e0 21px,#f4f3ef 26px);box-shadow:inset 4px 0 2px -2px #c2c0b8,inset -4px 0 2px -2px #b8b6ae"></div>
<span class="t" style="left:30px;top:149px;font:normal 12px/14px 'DejaVu Sans','Liberation Sans',sans-serif;color:#000;letter-spacing:-0.381px;">sigcreate.cpp</span>
<div style="left:40px;top:172px;width:942px;height:14px;background:#ecf3fc"></div>
<div class="code" style="top:172px;height:14px"><span class="c">/*</span></div>
<div class="code" style="top:186px;height:14px"><span class="c"> * Copyright (C) 2003 Marina Soboleva &lt;marina_soboleva@inbox.ru&gt;</span></div>
<div class="code" style="top:200px;height:14px"><span class="c"> */</span></div>
<div class="code" style="top:228px;height:14px"><span class="p">#include "sigcreate.h"</span></div>
<div class="code" style="top:256px;height:14px"><span class="p">#include &lt;qlabel.h&gt;</span></div>
<div class="code" style="top:284px;height:14px"><span class="p">#include &lt;kmainwindow.h&gt;</span></div>
<div class="code" style="top:298px;height:14px"><span class="p">#include &lt;klocale.h&gt;</span></div>
<div class="code" style="top:326px;height:14px">SigCreate::SigCreate()</div>
<div class="code" style="top:340px;height:14px">    : KMainWindow( <span class="n">0</span>, <span class="s">"SigCreate"</span> )</div>
<div class="code" style="top:354px;height:14px">{</div>
<div class="code" style="top:368px;height:14px">    <span class="c">// set the shell's ui resource file</span></div>
<div class="code" style="top:382px;height:14px">    setXMLFile(<span class="s">"sigcreateui.rc"</span>);</div>
<div class="code" style="top:410px;height:14px">    <span class="k">new</span> QLabel( <span class="s">"Hello World"</span>, <span class="k">this</span>, <span class="s">"hello label"</span> );</div>
<div class="code" style="top:424px;height:14px">}</div>
<div class="code" style="top:452px;height:14px">SigCreate::~SigCreate()</div>
<div class="code" style="top:466px;height:14px">{</div>
<div class="code" style="top:480px;height:14px">}</div>
<div class="code" style="top:508px;height:14px"><span class="p">#include "sigcreate.moc"</span></div>
<div style="left:32px;top:172px;width:1px;height:42px;background:#000"></div>
<div style="left:32px;top:213px;width:7px;height:1px;background:#000"></div>
<div style="left:27px;top:174px;width:9px;height:12px;border:1px solid #000;background:#fff"></div>
<div style="left:29px;top:180px;width:5px;height:1px;background:#000"></div>
<div style="left:32px;top:354px;width:1px;height:84px;background:#000"></div>
<div style="left:32px;top:437px;width:7px;height:1px;background:#000"></div>
<div style="left:27px;top:356px;width:9px;height:12px;border:1px solid #000;background:#fff"></div>
<div style="left:29px;top:362px;width:5px;height:1px;background:#000"></div>
<div style="left:32px;top:466px;width:1px;height:28px;background:#000"></div>
<div style="left:32px;top:493px;width:7px;height:1px;background:#000"></div>
<div style="left:27px;top:468px;width:9px;height:12px;border:1px solid #000;background:#fff"></div>
<div style="left:29px;top:474px;width:5px;height:1px;background:#000"></div>
<div style="left:983px;top:172px;width:16px;height:462px;background:#f4f3ee"></div>
<div style="left:983px;top:189px;width:16px;height:413px;border:1px solid #8c7c44;border-right:2px solid #8c8058;background:linear-gradient(90deg,#fdf4b0 0,#f0d880 1.5px,#fdeaa2 4px,#fce69a 7px,#ecd484 10px,#d6ba62 13px)"></div>
<div style="left:984px;top:389px;width:14px;height:1px;background:#8c7c44"></div>
<div style="left:984px;top:391px;width:14px;height:1px;background:#8c7c44"></div>
<div style="left:984px;top:393px;width:14px;height:1px;background:#8c7c44"></div>
<div style="left:984px;top:395px;width:14px;height:1px;background:#8c7c44"></div>
<div style="left:984px;top:397px;width:14px;height:1px;background:#8c7c44"></div>
<div style="left:984px;top:399px;width:14px;height:1px;background:#8c7c44"></div>
<div style="left:984px;top:401px;width:14px;height:1px;background:#8c7c44"></div>
<div style="left:983px;top:172px;width:16px;height:17px;border:1px solid #8c8a84;border-radius:2px;background:linear-gradient(90deg,#e6e5e0,#dcdbd6)"><svg class="a" style="left:2px;top:2px" width="11" height="11" viewBox="0 0 11 11"><path d="M5 .5L.5 5.2h2.6v4.3h4.6V5.2h2.6z" fill="#c6c6c0"/><path d="M3 10h5V5.6h2.4" stroke="#fff" stroke-width="1" fill="none"/></svg></div>
<div style="left:983px;top:602px;width:16px;height:31px;border:1px solid #8c8a84;border-radius:2px;background:linear-gradient(90deg,#e6e5e0,#dcdbd6)"><svg class="a" style="left:2px;top:2px" width="11" height="11" viewBox="0 0 11 11"><path d="M5 .5L.5 5.2h2.6v4.3h4.6V5.2h2.6z" fill="#c6c6c0"/><path d="M3 10h5V5.6h2.4" stroke="#fff" stroke-width="1" fill="none"/></svg><svg class="a" style="left:2px;top:17px" width="11" height="11" viewBox="0 0 11 11"><path d="M3.1 .8h4.6v4h2.6L5.6 10 .6 4.8h2.5z" fill="#c6c6c0"/><path d="M6 10.2l4.6-4.8" stroke="#fff" stroke-width="1" fill="none"/></svg><div style="left:3px;top:14px;width:8px;height:1px;background:#000"></div></div>
<div class="bt" style="left:22px;top:637px;width:78px"></div>
<span class="t" style="left:32px;top:640px;font:normal 12px/14px 'DejaVu Sans','Liberation Sans',sans-serif;color:#000;letter-spacing:-0.295px;">Messages</span>
<div class="bt" style="left:102px;top:637px;width:84px"></div>
<span class="t" style="left:113px;top:640px;font:normal 12px/14px 'DejaVu Sans','Liberation Sans',sans-serif;color:#000;letter-spacing:-0.515px;">Application</span>
<div class="bt" style="left:188px;top:637px;width:122px"></div>
<span class="t" style="left:199px;top:640px;font:normal 12px/14px 'DejaVu Sans','Liberation Sans',sans-serif;color:#000;letter-spacing:-0.364px;">Difference Viewer</span>
<div class="bt" style="left:313px;top:637px;width:45px"></div>
<span class="t" style="left:324px;top:640px;font:normal 12px/14px 'DejaVu Sans','Liberation Sans',sans-serif;color:#000;letter-spacing:-0.373px;">CVS</span>
<div class="bt" style="left:360px;top:637px;width:71px"></div>
<span class="t" style="left:371px;top:640px;font:normal 12px/14px 'DejaVu Sans','Liberation Sans',sans-serif;color:#000;letter-spacing:-0.097px;">Valgrind</span>
<div class="bt" style="left:433px;top:637px;width:49px"></div>
<span class="t" style="left:444px;top:640px;font:normal 12px/14px 'DejaVu Sans','Liberation Sans',sans-serif;color:#000;letter-spacing:-0.242px;">Grep</span>
<div class="bt" style="left:485px;top:637px;width:76px"></div>
<span class="t" style="left:496px;top:640px;font:normal 12px/14px 'DejaVu Sans','Liberation Sans',sans-serif;color:#000;letter-spacing:-0.900px;">Заменить</span>
<div class="bt" style="left:563px;top:637px;width:66px"></div>
<span class="t" style="left:574px;top:640px;font:normal 12px/14px 'DejaVu Sans','Liberation Sans',sans-serif;color:#000;letter-spacing:-0.376px;">Konsole</span>
<div class="bt" style="left:631px;top:637px;width:88px"></div>
<span class="t" style="left:642px;top:640px;font:normal 12px/14px 'DejaVu Sans','Liberation Sans',sans-serif;color:#000;letter-spacing:-0.514px;">Breakpoints</span>
<div class="bt" style="left:721px;top:637px;width:91px"></div>
<span class="t" style="left:732px;top:640px;font:normal 12px/14px 'DejaVu Sans','Liberation Sans',sans-serif;color:#000;letter-spacing:-0.422px;">Frame Stack</span>
<div class="bt" style="left:815px;top:637px;width:93px"></div>
<span class="t" style="left:826px;top:640px;font:normal 12px/14px 'DejaVu Sans','Liberation Sans',sans-serif;color:#000;letter-spacing:-0.499px;">Disassemble</span>
<div class="bt" style="left:910px;top:637px;width:46px"></div>
<span class="t" style="left:921px;top:640px;font:normal 12px/14px 'DejaVu Sans','Liberation Sans',sans-serif;color:#000;letter-spacing:-0.860px;">GDB</span>
<div class="bt" style="left:22px;top:655px;width:74px"></div>
<span class="t" style="left:32px;top:658px;font:normal 12px/14px 'DejaVu Sans','Liberation Sans',sans-serif;color:#000;letter-spacing:-0.364px;">Problems</span>
<div style="left:563px;top:637px;width:66px;height:18px;border:1px dotted #000"></div>
<div style="left:790px;top:676px;width:208px;height:26px;border-left:1px solid #55534c;border-top:1px solid #55534c;border-right:1px solid #fff"></div>
<div style="left:1000px;top:676px;width:17px;height:26px;border-left:1px solid #55534c;border-top:1px solid #55534c;border-right:1px solid #fff"></div>
<div style="left:3px;top:701px;width:1017px;height:1px;background:#f6f0dc"></div>
<div style="left:3px;top:26px;width:1px;height:676px;background:#f6ecd8"></div>
<div style="left:1019px;top:27px;width:1px;height:115px;background:#dbd8cc"></div>
</body></html>
